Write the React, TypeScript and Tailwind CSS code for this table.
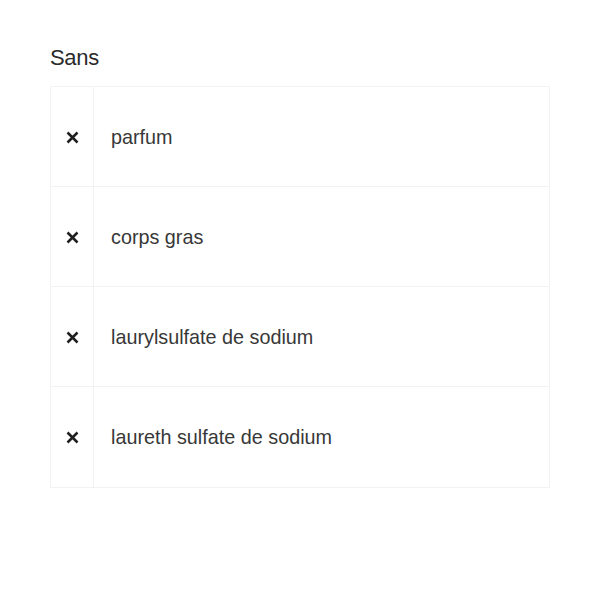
import React from 'react';

const items = ['parfum', 'corps gras', 'laurylsulfate de sodium', 'laureth sulfate de sodium'];

function Cross() {
  return (
    <svg width="13" height="13" viewBox="0 0 13 13" className="text-[#1f1f1f]">
      <path d="M1.5 1.5 L11.5 11.5 M11.5 1.5 L1.5 11.5" stroke="currentColor" strokeWidth="2.5" strokeLinecap="butt" />
    </svg>
  );
}

export default function App() {
  return (
    <div className="w-[600px] h-[600px] bg-white px-[50px] pt-[44px]" style={{ fontFamily: '"Liberation Sans", Arial, sans-serif' }}>
      {/* Heading */}
      <h2 className="text-[22px] leading-[28px] text-[#2b2b2b] tracking-[-0.3px] mb-[14px]">Sans</h2>

      {/* List */}
      <div className="border border-[#f2f2f2] divide-y divide-[#f2f2f2]">
        {items.map((item) => (
          <div key={item} className="flex h-[100px]">
            <div className="w-[43px] shrink-0 border-r border-[#f2f2f2] flex items-center justify-center pt-[1px]">
              <Cross />
            </div>
            <div className="flex items-center pl-[17px] pt-[2px] text-[19.8px] text-[#383838]">
              {item}
            </div>
          </div>
        ))}
      </div>
    </div>
  );
}
